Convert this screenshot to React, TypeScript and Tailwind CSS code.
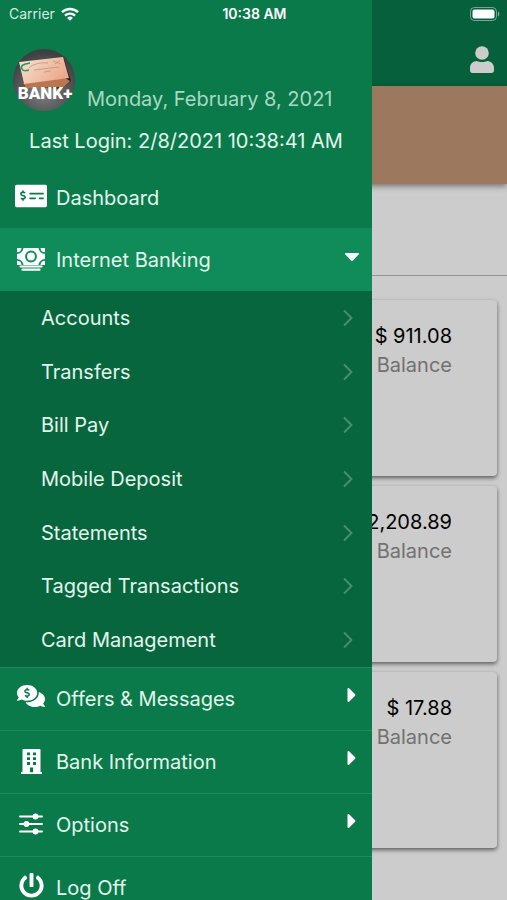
import type { ReactNode } from "react";
import {
  FaCaretDown,
  FaCaretRight,
  FaCommentsDollar,
  FaMoneyCheckAlt,
  FaPowerOff,
} from "react-icons/fa";

const bankingLinks = [
  "Accounts",
  "Transfers",
  "Bill Pay",
  "Mobile Deposit",
  "Statements",
  "Tagged Transactions",
  "Card Management",
];

const accounts = [
  { id: "checking", balance: "$ 911.08" },
  { id: "savings", balance: "$ 2,208.89" },
  { id: "club", balance: "$ 17.88" },
];

function WifiIcon() {
  return (
    <svg viewBox="0 0 18 14" className="h-[14px] w-[18px] text-white" fill="none" aria-hidden="true">
      <path stroke="currentColor" strokeWidth="2.4" d="M1 5.2a11.500 11.500 0 0 1 16 0M4 8.600a7.200 7.200 0 0 1 10 0" />
      <path fill="currentColor" d="M9 13.800 6.100 10.900a4.100 4.100 0 0 1 5.800 0z" />
    </svg>
  );
}

function PersonIcon() {
  return (
    <svg viewBox="0 0 24 27" className="h-[27px] w-6" fill="currentColor" aria-hidden="true">
      <circle cx="12" cy="7" r="6.800" />
      <path d="M7 15c2 1.300 8 1.300 10 0 4 0 7 3 7 7v2.500c0 1.500-1 2.500-2.500 2.500h-19C1 27 0 26 0 24.500V22c0-4 3-7 7-7z" />
    </svg>
  );
}

function MoneyStackIcon() {
  return (
    <svg viewBox="0 0 28 23" className="h-[23px] w-7" fill="none" aria-hidden="true">
      <path
        fill="currentColor"
        d="M6.500 0h15A6.500 6.500 0 0 0 28 6v5a6.500 6.500 0 0 0-6.500 6h-15A6.500 6.500 0 0 0 0 11V6a6.500 6.500 0 0 0 6.500-6z"
      />
      <path fill="currentColor" d="M0 0h4.500A4.500 4.500 0 0 1 0 4.200zM28 0h-4.500A4.500 4.500 0 0 0 28 4.200zM0 17h4.500A4.500 4.500 0 0 0 0 12.800zM28 17h-4.500a4.500 4.500 0 0 1 4.500-4.200z" />
      <circle cx="14" cy="8.500" r="4.900" stroke="#0f8c59" strokeWidth="2" />
      <path stroke="currentColor" strokeWidth="2.2" strokeLinecap="round" d="M3.500 18.500h21M5.500 21.700h17" />
    </svg>
  );
}

function BuildingIcon() {
  return (
    <svg viewBox="0 0 21 25" className="h-[25px] w-[21px]" fill="currentColor" aria-hidden="true">
      <path
        fillRule="evenodd"
        d="M2.500 0h16c.8 0 1 .4 1 1v22H21v2H0v-2h1.500V1c0-.6.2-1 1-1zM6 3.500v2.800h3V3.500zM12 3.500v2.800h3V3.500zM6 8.300v2.800h3V8.300zM12 8.300v2.800h3V8.300zM6 13.100v2.800h3v-2.800zM12 13.100v2.800h3v-2.800zM8.900 18.500v4.800h3.200v-4.800z"
      />
    </svg>
  );
}

function SlidersIcon() {
  return (
    <svg viewBox="0 0 24 22" className="h-[22px] w-6" aria-hidden="true">
      <path stroke="currentColor" strokeWidth="1.800" strokeLinecap="round" d="M1 3.500h22M1 11h22M1 18.500h22" />
      <g fill="currentColor">
        <circle cx="16.500" cy="3.500" r="2.900" />
        <circle cx="7.500" cy="11" r="2.900" />
        <circle cx="16.500" cy="18.500" r="2.900" />
      </g>
    </svg>
  );
}

function Chevron() {
  return (
    <svg viewBox="0 0 10 18" className="h-[18px] w-[10px] text-[#45916c]" fill="none" aria-hidden="true">
      <path stroke="currentColor" strokeWidth="1.900" d="m1 1.500 7.500 7.500L1 16.500" />
    </svg>
  );
}

function BankLogo() {
  return (
    <svg viewBox="0 0 62 62" className="size-[62px]" role="img" aria-label="Bank Plus">
      <defs>
        <radialGradient id="disc" cx="0.5" cy="0.65" r="0.6">
          <stop offset="0" stopColor="#858585" />
          <stop offset="1" stopColor="#3d4041" />
        </radialGradient>
        <linearGradient id="check" x1="0" y1="0" x2="1" y2="0.5">
          <stop offset="0" stopColor="#f5e6d8" />
          <stop offset="1" stopColor="#eea88b" />
        </linearGradient>
      </defs>
      <circle cx="31" cy="31" r="31" fill="url(#disc)" />
      <path fill="#2e211c" d="m6 13 5 24 38 3 9-8-7-22z" />
      <path fill="#b9774f" d="m10 34 42-5 5 3-6 6-38 1z" />
      <path fill="url(#check)" d="m6 13 44-5 6 21-45 6z" />
      <path fill="none" stroke="#2d9a5c" strokeWidth="1.600" d="M17 14c-7 1-10 3-8 6 1 2 4 2 7 1" />
      <path fill="none" stroke="#b08e7c" strokeWidth="0.700" d="M16 19c3-4 13-6 19-5M21 21l25-3M31 23l7-1M40 12l8 3M42 15l5-4" />
      <text
        x="32"
        y="50"
        textAnchor="middle"
        fill="#fff"
        className="font-['Roboto','Liberation_Sans',sans-serif] text-[17px] font-black"
      >
        BANK+
      </text>
    </svg>
  );
}

function StatusBar() {
  return (
    <div className="absolute inset-x-0 top-0 z-30 grid h-7 grid-cols-3 items-center pl-[9px] pr-[7px] text-white">
      <div className="flex items-center gap-1.5 text-sm text-[#d3eee1]">
        Carrier
        <WifiIcon />
      </div>
      <div className="text-center text-sm font-semibold">10:38 AM</div>
      <svg viewBox="0 0 30 14" className="h-[14px] w-[30px] justify-self-end" aria-label="Battery full">
        <rect x="0.500" y="0.500" width="26" height="13" rx="4" fill="none" stroke="#fff" strokeOpacity="0.450" />
        <rect x="2.500" y="2.500" width="22" height="9" rx="2" fill="#fff" />
        <path d="M28 4.500c1.800.6 1.800 4.400 0 5z" fill="#fff" fillOpacity="0.500" />
      </svg>
    </div>
  );
}

type MenuButtonProps = {
  icon: ReactNode;
  label: string;
  open?: boolean;
  caret?: boolean;
};

function MenuButton({ icon, label, open = false, caret = true }: MenuButtonProps) {
  return (
    <button
      type="button"
      aria-expanded={caret ? open : undefined}
      className={`flex h-[63px] w-full items-center border-t pl-[15px] pr-3 text-left ${
        open ? "border-[#0f8c59] bg-[#0f8c59]" : "border-[#1a8b5c]"
      }`}
    >
      <span className="flex w-8 justify-center pb-0.5 text-white">{icon}</span>
      <span className="ml-[9px] flex-1">{label}</span>
      {caret && (
        <span className="flex w-4 justify-center pb-2 text-white">
          {open ? <FaCaretDown className="size-6 shrink-0" /> : <FaCaretRight className="size-6 shrink-0" />}
        </span>
      )}
    </button>
  );
}

function Drawer() {
  return (
    <aside className="absolute inset-y-0 left-0 z-20 w-[372px] max-w-full overflow-hidden bg-[#0a7a4b] text-xl text-[#e3f6ec]">
      <div className="px-[13px] pt-[49px]">
        <div className="flex items-end gap-3">
          <BankLogo />
          <p className="leading-6 text-[#a9d8c2]">Monday, February 8, 2021</p>
        </div>
        <p className="mt-4 text-center leading-7">Last Login: 2/8/2021 10:38:41 AM</p>
      </div>
      <nav className="mt-3">
        <a href="#dashboard" className="flex h-[61px] items-center pl-[15px]">
          <FaMoneyCheckAlt className="h-8 w-8 pb-1 text-white" />
          <span className="ml-[9px]">Dashboard</span>
        </a>
        <MenuButton icon={<MoneyStackIcon />} label="Internet Banking" open />
        <ul className="grid h-[376px] grid-rows-7 bg-[#08663f]">
          {bankingLinks.map((label) => (
            <li key={label}>
              <a href="#banking" className="flex h-full items-center justify-between pl-[41px] pr-[19px]">
                {label}
                <Chevron />
              </a>
            </li>
          ))}
        </ul>
        <MenuButton icon={<FaCommentsDollar className="mb-1 size-7" />} label="Offers & Messages" />
        <MenuButton icon={<BuildingIcon />} label="Bank Information" />
        <MenuButton icon={<SlidersIcon />} label="Options" />
        <MenuButton icon={<FaPowerOff className="mb-1 size-[25px]" />} label="Log Off" caret={false} />
      </nav>
    </aside>
  );
}

export default function App() {
  return (
    <div className="relative min-h-screen overflow-hidden bg-white font-['Inter','Liberation_Sans',sans-serif]">
      <StatusBar />
      <header className="flex h-[86px] items-end justify-end bg-[#08794a] px-[13px] pb-[13px]">
        <button type="button" aria-label="Profile" className="text-white">
          <PersonIcon />
        </button>
      </header>
      <div className="h-[98px] bg-[#c29676] shadow-[0_2px_6px_rgba(0,0,0,0.45)]" />
      <div className="h-[92px] border-b border-[#b8b8b8]" />
      <main className="flex flex-col gap-[10px] px-[10px] pt-6">
        {accounts.map((account) => (
          <section
            key={account.id}
            className="h-[176px] rounded-sm pr-[45px] pt-[22px] text-right text-xl shadow-[0_2px_4px_rgba(0,0,0,0.55)]"
          >
            <p className="leading-[29px] text-black">{account.balance}</p>
            <p className="leading-[29px] text-[#8e8e8e]">Balance</p>
          </section>
        ))}
      </main>
      <div className="absolute inset-0 z-10 bg-black/20" />
      <Drawer />
    </div>
  );
}
